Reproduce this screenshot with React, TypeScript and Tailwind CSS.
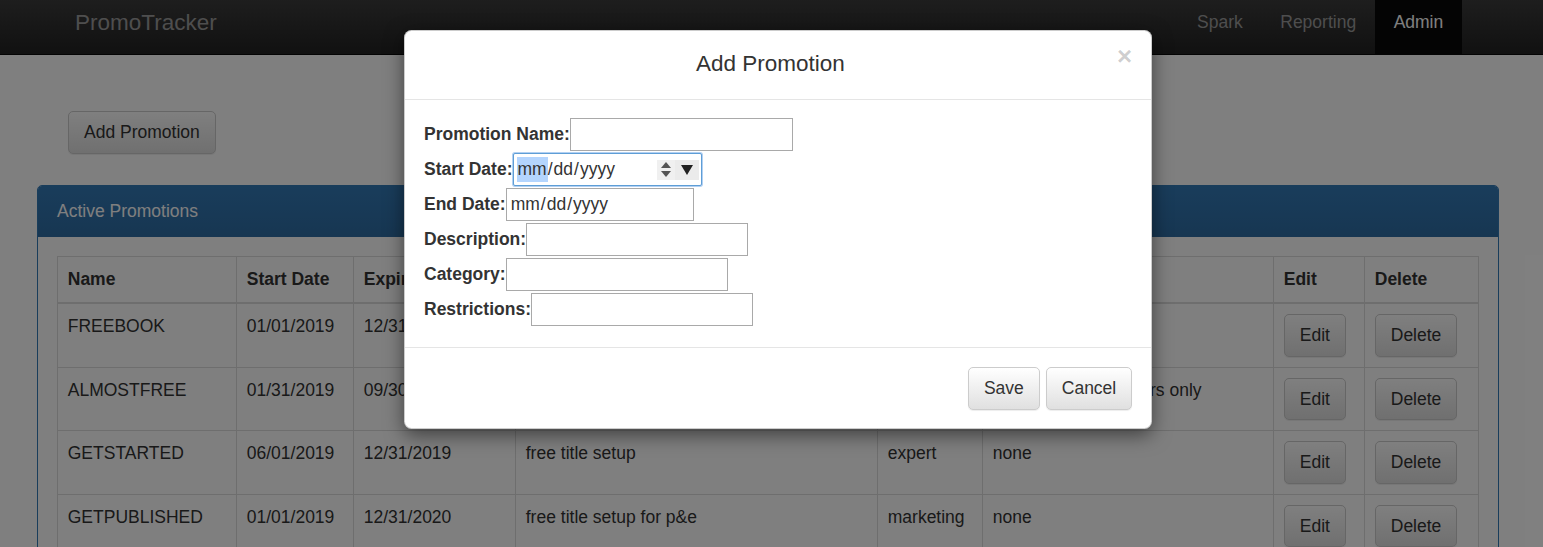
import React from "react";

const font = "font-['Liberation_Sans',Arial,Helvetica,sans-serif]";

function Btn({ children, className = "" }: { children: React.ReactNode; className?: string }) {
  return (
    <button
      className={`inline-flex items-center justify-center h-[42.5px] px-[15px] leading-[25px] text-[17.5px] text-[#333] rounded-[5px] border border-[#ccc] bg-gradient-to-b from-[#ffffff] to-[#e0e0e0] shadow-[inset_0_1px_0_rgba(255,255,255,0.15),0_1px_1px_rgba(0,0,0,0.075)] ${className}`}
    >
      {children}
    </button>
  );
}

const rows = [
  ["FREEBOOK", "01/01/2019", "12/31/2019", "free book", "expert", "none"],
  ["ALMOSTFREE", "01/31/2019", "09/30/2019", "discounted title setup", "expert", "KDP Select, members only"],
  ["GETSTARTED", "06/01/2019", "12/31/2019", "free title setup", "expert", "none"],
  ["GETPUBLISHED", "01/01/2019", "12/31/2020", "free title setup for p&e", "marketing", "none"],
  ["SUMMERSALE", "06/01/2020", "08/31/2020", "summer discount", "marketing", "none"],
];

const cols: [string, string][] = [
  ["Name", "w-[179px]"],
  ["Start Date", "w-[117px]"],
  ["Expiration Date", "w-[162px]"],
  ["Description", "w-[362px]"],
  ["Category", "w-[105px]"],
  ["Restrictions", "w-[291px]"],
  ["Edit", "w-[91px]"],
  ["Delete", "w-[114px]"],
];

function TextInput({ w }: { w: string }) {
  return <div className={`${w} h-[33px] border border-[#a9a9a9] bg-white`} />;
}

function DateText() {
  return (
    <>
      <span className="px-[1px]">mm</span>
      <span>/</span>
      <span className="px-[1px]">dd</span>
      <span>/</span>
      <span className="px-[1px]">yyyy</span>
    </>
  );
}

export default function App() {
  return (
    <div className={`relative w-[1543px] h-[547px] overflow-hidden bg-white text-[#333] text-[17.5px] ${font}`}>
      {/* Navbar */}
      <div className="flex h-[55px] bg-gradient-to-b from-[#3c3c3c] to-[#222] border-b border-[#080808]">
        <div className="ml-[75px] mt-[9.5px] leading-[25px] text-[22.5px] text-[#9d9d9d]">PromoTracker</div>
        <div className="ml-auto mr-[81px] flex h-full">
          <div className="px-[18.75px] pt-[9.5px] leading-[25px] text-[#9d9d9d]">Spark</div>
          <div className="px-[18.75px] pt-[9.5px] leading-[25px] text-[#9d9d9d]">Reporting</div>
          <div className="px-[18.75px] pt-[9.5px] leading-[25px] text-white bg-[#080808]">Admin</div>
        </div>
      </div>

      {/* Main content */}
      <div className="pl-[37px] pt-[56px]">
        <Btn className="ml-[31px]">Add Promotion</Btn>
        <div className="mt-[31px] w-[1462px] border border-[#337ab7] rounded-[5px] bg-white">
          <div className="h-[51px] flex items-center pl-[19px] text-white bg-gradient-to-b from-[#337ab7] to-[#2e6da4] rounded-t-[4px]">
            Active Promotions
          </div>
          <div className="px-[18.75px] pt-[19.75px] pb-[18.75px]">
            <table className="table-fixed border-collapse w-[1421px]">
              <thead>
                <tr>
                  {cols.map(([c, w]) => (
                    <th
                      key={c}
                      className={`${w} text-left font-bold align-bottom px-[10px] pt-[10px] pb-[10px] leading-[25px] border border-[#ddd] border-b-[2.5px]`}
                    >
                      {c}
                    </th>
                  ))}
                </tr>
              </thead>
              <tbody>
                {rows.map((r) => (
                  <tr key={r[0]}>
                    {r.map((cell, i) => (
                      <td key={i} className="align-top p-[10px] leading-[25px] border border-[#ddd] whitespace-nowrap overflow-hidden">
                        {cell}
                      </td>
                    ))}
                    <td className="align-top p-[10px] border border-[#ddd]">
                      <Btn>Edit</Btn>
                    </td>
                    <td className="align-top p-[10px] border border-[#ddd]">
                      <Btn>Delete</Btn>
                    </td>
                  </tr>
                ))}
              </tbody>
            </table>
          </div>
        </div>
      </div>

      {/* Backdrop */}
      <div className="absolute inset-0 bg-black/50" />

      {/* Modal */}
      <div className="absolute left-[404px] top-[30px] w-[748px] bg-white border border-black/20 rounded-[7.5px] shadow-[0_6px_19px_rgba(0,0,0,0.5)]">
        <div className="flex h-[69px] px-[18.75px] border-b border-[#e5e5e5]">
          <div className="flex-1 text-center text-[22.5px] leading-[32px] pt-[17px]">Add Promotion</div>
          <div className="pt-[12px] text-[26px] font-bold leading-[26px] text-black/20">×</div>
        </div>
        <div className="pl-[19px] pt-[18px] pb-[21px] flex flex-col gap-[2px] leading-[25px]">
          <div className="flex items-center h-[33px]">
            <span className="font-bold">Promotion Name:</span>
            <TextInput w="w-[223px]" />
          </div>
          <div className="flex items-center h-[33px]">
            <span className="font-bold">Start Date:</span>
            <div className="flex items-center w-[189px] h-[33px] pl-[3px] pr-[2px] bg-white border border-[#5e9ed6] rounded-[2px] shadow-[0_0_0_1px_#b2d0f2]">
              <span className="px-[1px] bg-[#b4d5fe]">mm</span>
              <span>/</span>
              <span className="px-[1px]">dd</span>
              <span>/</span>
              <span className="px-[1px]">yyyy</span>
              <div className="ml-auto flex h-[20px]">
                <div className="w-[18px] bg-[#f0f0f0] flex flex-col items-center justify-center gap-[3px]">
                  <svg width="10" height="6" viewBox="0 0 10 6"><path d="M5 0L10 6H0z" fill="#555" /></svg>
                  <svg width="10" height="6" viewBox="0 0 10 6"><path d="M0 0h10L5 6z" fill="#555" /></svg>
                </div>
                <div className="w-[24px] bg-[#ebebeb] flex items-center justify-center">
                  <svg width="12" height="10" viewBox="0 0 12 10"><path d="M0 0h12L6 10z" fill="#222" /></svg>
                </div>
              </div>
            </div>
          </div>
          <div className="flex items-center h-[33px]">
            <span className="font-bold">End Date:</span>
            <div className="flex items-center w-[188px] h-[33px] pl-[3px] border border-[#a9a9a9] bg-white">
              <DateText />
            </div>
          </div>
          <div className="flex items-center h-[33px]">
            <span className="font-bold">Description:</span>
            <TextInput w="w-[222px]" />
          </div>
          <div className="flex items-center h-[33px]">
            <span className="font-bold">Category:</span>
            <TextInput w="w-[222px]" />
          </div>
          <div className="flex items-center h-[33px]">
            <span className="font-bold">Restrictions:</span>
            <TextInput w="w-[222px]" />
          </div>
        </div>
        <div className="flex justify-end gap-[6px] px-[18.75px] pt-[19px] pb-[18.5px] border-t border-[#e5e5e5]">
          <Btn>Save</Btn>
          <Btn>Cancel</Btn>
        </div>
      </div>
    </div>
  );
}
